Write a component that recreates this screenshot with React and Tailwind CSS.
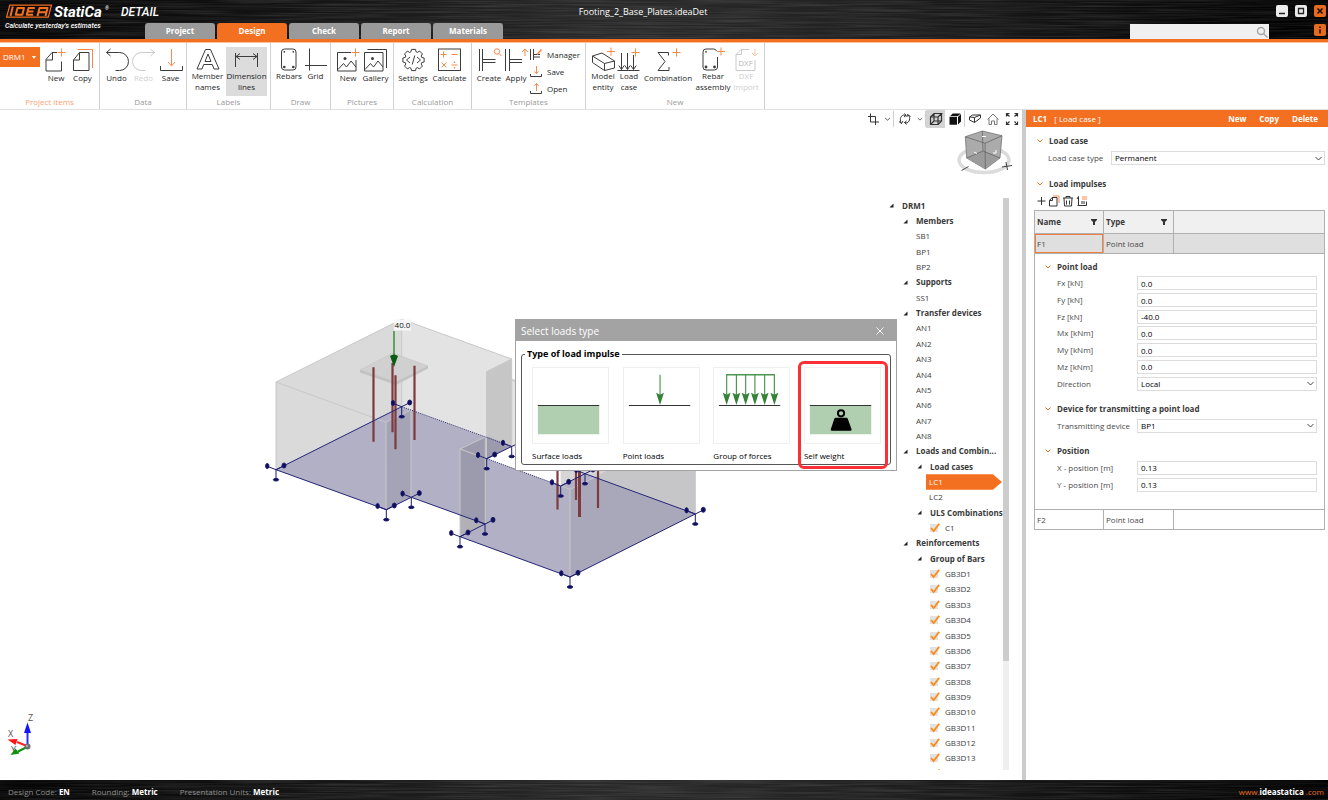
import React from "react";

const INK = "#3d3d3d";
const ORANGE = "#f58a4e";
const FADED = "#c9c9c9";

function BrushedMetal({ id }) {
  return (
    <svg className="pointer-events-none absolute inset-0 h-full w-full" aria-hidden="true">
      <defs>
        <filter id={id} x="0" y="0" width="100%" height="100%">
          <feTurbulence type="fractalNoise" baseFrequency="0.013 0.67" numOctaves="2" seed="4" />
          <feColorMatrix values="0 0 0 0 1  0 0 0 0 1  0 0 0 0 1  1.1 0 0 0 -0.38" />
        </filter>
        <linearGradient id={`${id}-shade`}>
          <stop offset="0" stopColor="#050505" />
          <stop offset="0.25" stopColor="#161616" />
          <stop offset="0.45" stopColor="#292929" />
          <stop offset="0.6" stopColor="#242424" />
          <stop offset="0.85" stopColor="#0e0e0e" />
          <stop offset="1" stopColor="#000000" />
        </linearGradient>
      </defs>
      <rect width="100%" height="100%" fill={`url(#${id}-shade)`} />
      <rect width="100%" height="100%" filter={`url(#${id})`} opacity="0.2" />
    </svg>
  );
}

function Icon({ box, w, h, color = INK, children }) {
  return (
    <svg
      width={w}
      height={h}
      viewBox={box}
      fill="none"
      stroke={color}
      strokeWidth="1"
      className="shrink-0"
      aria-hidden="true"
    >
      {children}
    </svg>
  );
}

function Plus({ x, y }) {
  return <path stroke={ORANGE} d={`M${x - 4} ${y}h8M${x} ${y - 4}v8`} />;
}

const gearPath = (() => {
  const pts = [];
  for (let i = 0; i < 8; i++) {
    const a = (i * Math.PI) / 4;
    [[-0.3, 8.6], [-0.19, 10.8], [0.19, 10.8], [0.3, 8.6]].forEach(([d, r]) => {
      pts.push(`${(414.5 + r * Math.sin(a + d)).toFixed(2)} ${(60 - r * Math.cos(a + d)).toFixed(2)}`);
    });
  }
  return `M${pts.join("L")}Z`;
})();

const icons = {
  newItem: (
    <Icon box="44 47 26 26" w={26} h={26}>
      <path d="M58 52.5h-5l-6 7v11.500h15.500V61.500M53.500 52.500v7.500h-6.500" />
      <Plus x={62.5} y={52.5} />
    </Icon>
  ),
  copy: (
    <Icon box="71 47 24 26" w={24} h={26}>
      <path d="M73.500 60l6-7.500h9.500v18h-15.500zM79.500 52.500v7.500h-6" />
      <path stroke={ORANGE} d="M77.500 49.500h15v18.500" />
    </Icon>
  ),
  undo: (
    <Icon box="104 47 26 26" w={26} h={26}>
      <path d="M106.500 52.500h13a9 9 0 0 1 0 18h-4M110.500 49l-4 3.500 4 3.500" />
    </Icon>
  ),
  redo: (
    <Icon box="131 47 26 26" w={26} h={26} color={FADED}>
      <path d="M154.500 52.500h-13a9 9 0 0 0 0 18h4M150.500 49l4 3.500-4 3.500" />
    </Icon>
  ),
  save: (
    <Icon box="157 47 26 26" w={26} h={26}>
      <path d="M159.500 66v4.500h22V66" />
      <path stroke={ORANGE} d="M170.500 49v16.500M167 62l3.500 4 3.500-4" />
    </Icon>
  ),
  member: (
    <Icon box="195 47 26 24" w={26} h={24}>
      <path d="M205.500 49.500h5l8.500 19.500h-5l-1.700-4.500h-8.600l-1.700 4.500h-5zM208 54l-3 7.500h6z" />
    </Icon>
  ),
  dimension: (
    <Icon box="234 47 26 24" w={26} h={24}>
      <path d="M235.500 53v14M257.500 53v14M236 56.500h21M240 53.500l-4 3 4 3M253 53.500l4 3-4 3" />
    </Icon>
  ),
  rebars: (
    <Icon box="277 47 24 24" w={24} h={24}>
      <rect x="281.500" y="49" width="14.500" height="21" rx="3" />
      <g fill={INK} stroke="none">
        <circle cx="284.300" cy="51.800" r="0.9" />
        <circle cx="293.300" cy="51.800" r="0.9" />
        <circle cx="284.300" cy="67" r="1.300" />
        <circle cx="293.300" cy="67" r="1.300" />
      </g>
    </Icon>
  ),
  grid: (
    <Icon box="303 47 24 24" w={24} h={24}>
      <path d="M308.500 48.500v22M304 65.500h22" />
    </Icon>
  ),
  picture: (
    <Icon box="335 47 26 26" w={26} h={26}>
      <path d="M351 52.500h-13.500v18.500h18.500V60M338 69.500l5.500-6 3 3.500 4.500-6 5 6" />
      <circle cx="345" cy="58.500" r="1.500" fill={INK} stroke="none" />
      <Plus x={355.5} y={52.500} />
    </Icon>
  ),
  gallery: (
    <Icon box="363 47 26 26" w={26} h={26}>
      <path d="M364.500 52.500h18.500v18.500h-18.500zM367.500 49.500h19v18.500M365 69.500l5.500-6 3 3.500 4.500-6 5 6" />
      <circle cx="372.500" cy="58.500" r="1.500" fill={INK} stroke="none" />
    </Icon>
  ),
  settings: (
    <Icon box="401 47 26 26" w={26} h={26}>
      <path strokeLinejoin="round" d={gearPath} />
      <path d="M411 57l-3.500 3 3.500 3M418 57l3.500 3-3.500 3M415.800 55.500l-2.600 9" />
    </Icon>
  ),
  calculate: (
    <Icon box="437 47 25 26" w={25} h={26}>
      <rect x="438.500" y="49" width="22" height="21.500" />
      <path stroke={ORANGE} d="M440.500 54.500h6M443.500 51.500v6M451.500 54.500h6M441.500 62.500l5 5M446.500 62.500l-5 5M451.500 65h6" />
      <path stroke={ORANGE} strokeWidth="1.400" d="M454.500 61.600v1.400M454.500 67v1.400" />
    </Icon>
  ),
  create: (
    <Icon box="476 47 25 26" w={25} h={26}>
      <path d="M478.500 49v22M481.500 49v22M482 59.500h12.500M482 62.500h12.500" />
      <path stroke={ORANGE} d="M498.200 53.700l2.300 2.500" />
      <circle cx="496" cy="51.500" r="2.700" stroke={ORANGE} />
    </Icon>
  ),
  apply: (
    <Icon box="503 47 25 26" w={25} h={26}>
      <path d="M504.500 49v22M508.500 49v22M509 59.500h12M509 62.500h12" />
      <path stroke={ORANGE} d="M524 49.500v6.500M521 52l3-3 3 3" />
    </Icon>
  ),
  manager: (
    <Icon box="530 49 13 13" w={13} h={13}>
      <path d="M530.500 50v11M533.500 50v11M534 55.500h6M534 58h6" />
      <path stroke={ORANGE} strokeWidth="1.600" d="M541.500 50.500l-4.500 5" />
    </Icon>
  ),
  saveSmall: (
    <Icon box="530 65 13 13" w={13} h={13}>
      <path d="M530.500 74v2.500h11V74" />
      <path stroke={ORANGE} d="M536.500 66v7.500M534.500 71.500l2 2.200 2-2.200" />
    </Icon>
  ),
  openSmall: (
    <Icon box="530 82 13 13" w={13} h={13}>
      <path d="M530.500 91v2.500h11V91" />
      <path stroke={ORANGE} d="M536.500 83.500v7.500M534.500 85.700l2-2.200 2 2.200" />
    </Icon>
  ),
  entity: (
    <Icon box="590 47 27 24" w={27} h={24}>
      <path strokeLinejoin="round" d="M592.500 56l9.500-3 12.500 8-10 2.500zM592.500 56v6.500l12 8V63.500M614.500 61v7l-10 2.500" />
      <Plus x={611} y={51.500} />
    </Icon>
  ),
  loadCase: (
    <Icon box="617 47 26 24" w={26} h={24}>
      <path d="M618.500 70.500h22M622.500 53v16.500M628.500 53v16.500M634.500 55v14.500M619.800 65.500l2.700 4 2.700-4M625.800 65.500l2.700 4 2.700-4M631.800 65.500l2.700 4 2.700-4" />
      <Plus x={636.5} y={52.500} />
    </Icon>
  ),
  combination: (
    <Icon box="655 47 26 26" w={26} h={26}>
      <path d="M668.500 55.500v-3h-10.500l7 9-7 9h11v-3.500" />
      <Plus x={676.5} y={52.500} />
    </Icon>
  ),
  rebarNew: (
    <Icon box="700 47 26 24" w={26} h={24}>
      <path d="M717.500 57v10a3 3 0 0 1-3 3h-8.500a3 3 0 0 1-3-3V52a3 3 0 0 1 3-3h7.500" />
      <path d="M713.500 49a3 3 0 0 1 3 2" />
      <g fill={INK} stroke="none">
        <circle cx="706" cy="51.800" r="0.900" />
        <circle cx="706" cy="67" r="1.400" />
        <circle cx="714.500" cy="67" r="1.400" />
      </g>
      <Plus x={721} y={51.500} />
    </Icon>
  ),
  dxf: (
    <Icon box="734 47 25 24" w={25} h={24} color={FADED}>
      <path d="M749 49.500h-8l-5 5v16h19V60M741.500 49.500v5h-5.500" />
      <text x="745.500" y="66" textAnchor="middle" fontSize="8" fill="#b8b8b8" stroke="none">
        DXF
      </text>
      <path stroke="#fbc6a6" d="M755 49v6.500M752 53l3 3 3-3" />
    </Icon>
  ),
};

function Tool({ icon, label, width, active, disabled }) {
  return (
    <button
      type="button"
      disabled={disabled}
      className={`flex h-[49px] flex-col items-center justify-start text-center leading-[11px] ${width} ${
        active ? "bg-[#dcdcdc]" : ""
      } ${disabled ? "text-[#cfcfcf]" : "text-[#1f1f1f]"}`}
    >
      {icons[icon]}
      <span className="-mt-px flex flex-col whitespace-nowrap">
        {label.split("|").map((line) => (
          <span key={line}>{line}</span>
        ))}
      </span>
    </button>
  );
}

function Group({ title, width, pad = "pl-[3px]", titleClass = "text-[#9a9a9a]", children }) {
  return (
    <section
      aria-label={title}
      className={`flex shrink-0 flex-col justify-between border-r border-[#d0d0d0] pb-px pt-1 ${width}`}
    >
      <div className={`flex items-start ${pad}`}>{children}</div>
      <h2 className={`text-center leading-3 ${titleClass}`}>{title}</h2>
    </section>
  );
}

function Header() {
  const tabs = ["Project", "Design", "Check", "Report", "Materials"];
  return (
    <header className="relative h-[43px] shrink-0 border-b border-[#fbc09c] bg-black text-white">
      <BrushedMetal id="metal-top" />
      <div className="relative grid h-full grid-cols-[145px_1fr_198px] border-b-[3px] border-[#f37021]">
        <div className="flex flex-col pl-1">
          <svg viewBox="4 0 160 21" className="h-[21px] w-[160px]" fontFamily="Roboto, 'Liberation Sans', sans-serif" fontStyle="italic">
            <path d="M9.800 5.200h41.700l-3.200 12h-41.700z" fill="none" stroke="#f37021" strokeWidth="1.200" />
            <g fill="none" stroke="#f37021" strokeWidth="2" strokeLinejoin="round">
              <path d="M12.800 6.500l-2.300 9.500M17.500 8h6.500l-1.700 6.800h-6.500zM34.800 8h-6.300l-1.700 6.800h6.300M28 11.400h5.500M37.500 16l2-8h8l-2 8M38.500 12.200h7.500" />
            </g>
            <text x="54" y="17" fontSize="15" fontWeight="700" fill="#fff">
              StatiCa
            </text>
            <text x="105" y="10" fontSize="5" fill="#fff">
              ®
            </text>
            <text x="121" y="15.500" fontSize="12" fontWeight="500" fill="#fff">
              DETAIL
            </text>
          </svg>
          <p className="pl-px pt-px font-[Roboto] text-[7px] font-medium italic leading-[9px]">
            Calculate yesterday's estimates
          </p>
        </div>
        <div className="relative flex min-w-0 items-end">
          <nav className="flex gap-0.5">
            {tabs.map((t) => (
              <a
                key={t}
                href={`#${t.toLowerCase()}`}
                className={`flex h-4 w-[70px] items-center justify-center rounded-t-[3px] font-bold text-white ${
                  t === "Design" ? "bg-[#f37021]" : "bg-[#9a9a9a]"
                }`}
              >
                {t}
              </a>
            ))}
          </nav>
        </div>
        <div className="flex flex-col items-end justify-between pt-[5px]">
          <div className="flex gap-[7px]">
            <button type="button" aria-label="Minimize" className="flex h-3 w-3 items-center justify-center rounded-[2px] bg-[#ececec]">
              <svg width="12" height="12" viewBox="0 0 12 12"><path d="M3 8.500h6" stroke="#222" strokeWidth="1.500" /></svg>
            </button>
            <button type="button" aria-label="Maximize" className="flex h-3 w-3 items-center justify-center rounded-[2px] bg-[#ececec]">
              <svg width="12" height="12" viewBox="0 0 12 12"><path d="M3.500 3.500h5v5h-5z" fill="none" stroke="#222" strokeWidth="1.300" /></svg>
            </button>
            <button type="button" aria-label="Close" className="mr-0.5 flex h-3 w-3 items-center justify-center rounded-[2px] bg-[#e86a1e]">
              <svg width="12" height="12" viewBox="0 0 12 12"><path d="M3.500 3.500l5 5M8.500 3.500l-5 5" stroke="#111" strokeWidth="1.600" /></svg>
            </button>
          </div>
          <div className="flex items-start gap-[45px]">
            <label className="flex h-[15px] w-[139px] items-center bg-[#f0f0f0]">
              <input aria-label="Search" className="min-w-0 flex-1 bg-transparent px-1 text-[#333] outline-none" />
              <svg width="14" height="14" viewBox="0 0 14 14" fill="none" stroke="#a8a8a8" strokeWidth="1.500">
                <circle cx="6" cy="6" r="3.500" />
                <path d="M8.500 8.500l4 4" />
              </svg>
            </label>
            <button type="button" aria-label="Info" className="mr-0.5 flex h-3 w-3 items-center justify-center rounded-[2px] bg-[#e86a1e]">
              <svg width="12" height="12" viewBox="0 0 12 12"><path d="M6 2.500v1.600M6 5.200v4.300" stroke="#111" strokeWidth="1.500" /></svg>
            </button>
          </div>
        </div>
      </div>
      <h1 className="absolute left-0 right-40 top-[5px] pl-[118px] text-center text-[9px] leading-[14px]">
        Footing_2_Base_Plates.ideaDet
      </h1>
    </header>
  );
}

function Ribbon() {
  return (
    <div className="flex h-[67px] shrink-0 border-b border-[#e0e0e0] bg-white">
      <Group title="Project items" width="w-[100px]" pad="pl-0" titleClass="text-[#f9a273]">
        <button type="button" className="mr-[3px] flex h-5 w-10 items-center justify-between bg-[#f37021] pl-[3px] pr-1 text-white">
          DRM1
          <svg width="4" height="3" viewBox="0 0 4 3" fill="#fff"><path d="M0 0h4L2 3z" /></svg>
        </button>
        <Tool icon="newItem" label="New" width="w-[26px]" />
        <Tool icon="copy" label="Copy" width="w-[27px]" />
      </Group>
      <Group title="Data" width="w-[87px]">
        <Tool icon="undo" label="Undo" width="w-[27px]" />
        <Tool icon="redo" label="Redo" width="w-[27px]" disabled />
        <Tool icon="save" label="Save" width="w-[27px]" />
      </Group>
      <Group title="Labels" width="w-[84px]" pad="pl-0.5">
        <Tool icon="member" label="Member|names" width="w-[37px]" />
        <Tool icon="dimension" label="Dimension|lines" width="w-[41px]" active />
      </Group>
      <Group title="Draw" width="w-[60px]">
        <Tool icon="rebars" label="Rebars" width="w-[30px]" />
        <Tool icon="grid" label="Grid" width="w-[23px]" />
      </Group>
      <Group title="Pictures" width="w-[63px]">
        <Tool icon="picture" label="New" width="w-[28px]" />
        <Tool icon="gallery" label="Gallery" width="w-[27px]" />
      </Group>
      <Group title="Calculation" width="w-[78px]" pad="pl-px">
        <Tool icon="settings" label="Settings" width="w-[36px]" />
        <Tool icon="calculate" label="Calculate" width="w-[37px]" />
      </Group>
      <Group title="Templates" width="w-[114px]">
        <Tool icon="create" label="Create" width="w-[28px]" />
        <Tool icon="apply" label="Apply" width="w-[26px]" />
        <div className="flex flex-col gap-1 pl-px pt-px">
          {[["manager", "Manager"], ["saveSmall", "Save"], ["openSmall", "Open"]].map(([k, t]) => (
            <button key={k} type="button" className="flex items-center gap-1 text-[#1f1f1f]">
              {icons[k]}
              {t}
            </button>
          ))}
        </div>
      </Group>
      <Group title="New" width="w-[179px]" pad="pl-1">
        <Tool icon="entity" label="Model|entity" width="w-[26px]" />
        <Tool icon="loadCase" label="Load|case" width="w-[26px]" />
        <Tool icon="combination" label="Combination" width="w-[52px]" />
        <Tool icon="rebarNew" label="Rebar|assembly" width="w-[38px]" />
        <Tool icon="dxf" label="DXF|Import" width="w-[28px]" disabled />
      </Group>
    </div>
  );
}

const supports = [
  [276, 469.7], [386.3, 509.7], [411.3, 497.3], [401.7, 406.7], [511.7, 446.5], [486.7, 458.7],
  [485, 524], [460, 536.7], [570, 577], [695.3, 514], [560.7, 486], [585, 473.7],
];

function Model() {
  return (
    <svg
      role="img"
      aria-label="Footing model"
      viewBox="260 310 460 290"
      className="absolute left-[260px] top-[200px] h-[290px] w-[460px]"
    >
      <path fill="#dadada" d="M276 382L401.700 319.300V410L276 469.700z" />
      <path fill="#e3e3e3" d="M401.700 319.300L511.700 359V446.500L585 473.700 695.300 514V427L486.500 371.500 486.700 458.700 401.700 420z" />
      <path fill="#d6d6d6" d="M560 430H695.300V514L585 473.700 560.700 486z" />
      <path fill="#c6c6c6" d="M486.300 371.700L511.700 359V446.500L486.700 458.700z" />
      <path fill="#d4d4d4" d="M386 422.300L411 410V497.300L386.300 509.700zM460 449L485.300 437V524L460 536.700z" />
      <path
        fill="#b1b0c4"
        d="M276 469.700L401.700 406.700 511.700 446.500 486.700 458.700 560.700 486 585 473.700 695.300 514 570 577 460 536.700 485 524 411.300 497.300 386.300 509.700z"
      />
      <path fill="#8f8ea0" fillOpacity="0.35" d="M386 422.300L411 410V497.300L386.300 509.700z" />
      <path fill="#7c7b8c" fillOpacity="0.400" d="M460 449L485.300 437V524L460 536.700z" />
      <path fill="#7c7b8c" fillOpacity="0.400" d="M486.700 436L511.700 446.500 486.700 458.700z" />
      <path fill="#8f8e98" fillOpacity="0.220" d="M570 489.300L695.300 427V514L570 577z" />
      <g fill="none" stroke="#c8c8c8" strokeWidth="1">
        <path d="M276 469.700V382L401.700 319.300 511.700 359 486.500 371.700 520 383M276 382L386 422.300 411 410M401.700 319.300V406.700M511.700 359V446.500M486.500 371.700V458" />
        <path d="M386 422.300V509.700M411 410V497.300M411 410L485.300 437 460 449 570 489.300 605.700 472M460 449V536.700M485.300 437V524M570 489.300V577M695.300 465V514" />
      </g>
      <path d="M360 370L393 353 428 366 396 382z" fill="#d0d0d0" stroke="#c4c4c4" strokeWidth="0.600" />
      <path d="M360 370v2.500L396 385l32-16.500V366L396 382z" fill="#c2c2c2" />
      <g stroke="#7d3a3f" strokeWidth="2.200">
        <path d="M373.500 367.300V441.700M395.500 375.300V449.300M414.500 365.700V440M392.500 363V432.300" />
        <path d="M557.500 465V509.500M576 465V500M598 465V508" />
        <path strokeWidth="3" d="M579.500 465V517" />
      </g>
      <g fill="none" stroke="#24247a" strokeWidth="1">
        <path d="M401.700 406.700L276 469.700 386.300 509.700 411.300 497.300 485 524 460 536.700 570 577 695.300 514 585 473.700 560.700 486M511.700 446.500L486.700 458.700" />
        <path strokeDasharray="1 1.200" d="M401.700 406.700L511.700 446.500M486.700 458.700L560.700 486" />
      </g>
      {supports.map(([x, y]) => (
        <g key={`${x}-${y}`} stroke="#1d1d6e" strokeWidth="1">
          <path fill="none" d={`M${x - 9} ${y - 3.5}L${x} ${y}L${x + 8} ${y - 4}M${x} ${y}v10`} />
          <ellipse cx={x - 8.7} cy={y - 3.7} rx="1.700" ry="2.600" fill="#0d0d5c" />
          <ellipse cx={x + 8} cy={y - 4.2} rx="2" ry="2.500" fill="#0d0d5c" />
          <ellipse cx={x} cy={y + 10} rx="2.700" ry="1.300" fill="#0d0d5c" />
        </g>
      ))}
      <path d="M394 331V356" stroke="#1c8a1c" strokeWidth="1.300" />
      <path d="M390 356q4-3 8 0l-4 11z" fill="#0b5c14" />
      <path d="M394 319.500h17v11h-17z" fill="#f6f6f6" />
      <text x="402.500" y="328" textAnchor="middle" fontSize="8" fill="#111">
        40.0
      </text>
    </svg>
  );
}

function Triad() {
  return (
    <svg viewBox="4 712 34 48" className="absolute bottom-5 left-1 h-12 w-[34px]" fontSize="9" role="img" aria-label="Axes">
      <path d="M27.500 746V730" stroke="#2a2aff" strokeWidth="2" />
      <path d="M24 733l3.500-10.500 3.500 10.500z" fill="#1414ff" />
      <path d="M27 746l-10-4" stroke="#f22" strokeWidth="2" />
      <path d="M7.500 739.500l10-0.500-2 6z" fill="#ff1414" />
      <path d="M27 747l-9 4.500" stroke="#0a940a" strokeWidth="2" />
      <path d="M10.500 755l5-6.500 4 5z" fill="#0a940a" />
      <circle cx="27.500" cy="746.500" r="3" fill="#6e6e6e" />
      <circle cx="27" cy="746" r="1.200" fill="#a5a5a5" />
      <g fill="#555" fontFamily="'Open Sans', sans-serif">
        <text x="28" y="721">Z</text>
        <text x="8" y="737">X</text>
        <text x="11" y="753">Y</text>
      </g>
    </svg>
  );
}

function ViewButton({ label, width, active, children }) {
  return (
    <button type="button" aria-label={label} className={`flex h-[18px] items-center justify-center ${width} ${active ? "bg-[#d4d4d4]" : ""}`}>
      <svg width="14" height="14" viewBox="0 0 14 14" fill="none" stroke="#333" strokeWidth="1">
        {children}
      </svg>
    </button>
  );
}

function ViewToolbar() {
  const sep = <span className="h-4 w-px bg-[#cfcfcf]" />;
  const chevron = <path d="M4 5.800L7 8.500l3-2.700" />;
  return (
    <div className="flex items-center justify-end pr-px">
      <ViewButton label="Clip" width="w-[18px]"><path d="M4.500 1.500v8.500h8.500M2 4.500h7.500V13" /></ViewButton>
      <ViewButton label="Clip options" width="w-[11px]">{chevron}</ViewButton>
      {sep}
      <ViewButton label="Rotate" width="w-[21px]">
        <path d="M3.500 11.500C1.500 8.500 2 4 5.500 3L8 3.500M6.500 1.500L8 3.500 6 5M1 9.500l2.500 2L5 9M9.500 2.500c3 2 3 6.500-0.500 8.500l-2.500-0.500M8.500 12.500l-2-2 2-1.500M12.500 4.500l-3-2L8.800 5" />
      </ViewButton>
      <ViewButton label="Rotate options" width="w-[10px]">{chevron}</ViewButton>
      {sep}
      <ViewButton label="Wireframe" width="w-[19px]" active>
        <path strokeWidth="1.200" d="M1.500 5h7.500v7.500h-7.500zM1.500 5l3.500-3.500h7.500L9 5M12.500 1.500V9L9 12.500M5 1.500V9h7.500M5 9l-3.500 3.500" />
      </ViewButton>
      <ViewButton label="Solid" width="w-[19px]">
        <path fill="#111" stroke="none" d="M1.500 4.800h7.500v8h-7.500zM2.200 4l2.500-2.500h8L10 4zM10 5l3-3v7.500l-3 3z" />
      </ViewButton>
      {sep}
      <ViewButton label="Section" width="w-[19px]">
        <path d="M1.500 5l3-2h8L6.500 5.500zM1.500 5v3l5 2.500v-5M6.500 10.500l6-4.500V3" />
      </ViewButton>
      <ViewButton label="Home" width="w-[18px]">
        <path stroke="#777" d="M1.500 7.500L7 2l5.500 5.500M3 6.500v6h2.500V9h3v3.500H11v-6" />
      </ViewButton>
      <ViewButton label="Fit" width="w-[19px]">
        <path strokeWidth="1.200" d="M1.500 4.500v-3h3M1.500 1.500l3 3M9.500 1.500h3v3M12.500 1.500l-3 3M1.500 9.500v3h3M1.500 12.500l3-3M9.500 12.500h3v-3M12.500 12.500l-3-3" />
      </ViewButton>
    </div>
  );
}

function NavCube() {
  return (
    <svg viewBox="955 128 60 50" className="mr-[7px] h-[50px] w-[60px] self-end" role="img" aria-label="View cube">
      <ellipse cx="984" cy="160" rx="25" ry="12.500" fill="none" stroke="#dcdcdc" strokeWidth="3.500" />
      <path d="M965.300 136.700L982.300 131 1002 135.700 1000 158 985.300 169 966.700 158z" fill="#ababab" stroke="#666" strokeWidth="0.700" />
      <path d="M966.700 158L983 151 1000 158 985.300 169z" fill="#9b9b9b" />
      <path d="M965.300 136.700L985 143.300 1002 135.700M985 143.300L985.300 169M982.300 131L983 151 966.700 158M983 151L1000 158" fill="none" stroke="#5d5d5d" strokeWidth="0.700" />
      <path d="M982 136.500h4M974 152l3 1.500M993 153h3v-3" stroke="#fff" strokeWidth="1" fill="none" />
      <path d="M961.500 170.500l7-4M1002 167l10-1.500M1006 162l1.500 8" stroke="#444" strokeWidth="1" />
    </svg>
  );
}

const tree = [
  [0, "DRM1"], [1, "Members"], [2, "SB1", "leaf"], [2, "BP1", "leaf"], [2, "BP2", "leaf"],
  [1, "Supports"], [2, "SS1", "leaf"], [1, "Transfer devices"],
  ...[1, 2, 3, 4, 5, 6, 7, 8].map((n) => [2, `AN${n}`, "leaf"]),
  [1, "Loads and Combin..."], [2, "Load cases"], [3, "LC1", "selected"], [3, "LC2", "leaf"],
  [2, "ULS Combinations"], [3, "C1", "check"], [1, "Reinforcements"], [2, "Group of Bars"],
  ...[1, 2, 3, 4, 5, 6, 7, 8, 9, 10, 11, 12, 13].map((n) => [3, `GB3D${n}`, "check"]),
];

const indents = ["pl-1", "pl-[18px]", "pl-8", "pl-[46px]"];
const leafIndents = ["", "", "pl-[31px]", "pl-11"];

function Check({ name }) {
  return (
    <span className="grid h-3 w-3 shrink-0">
      <input
        id={name}
        type="checkbox"
        defaultChecked
        className="peer col-start-1 row-start-1 h-2 w-2 appearance-none self-center bg-[#e2e2e2]"
      />
      <svg viewBox="0 0 12 12" className="pointer-events-none invisible col-start-1 row-start-1 peer-checked:visible" fill="none" stroke="#ff8a14" strokeWidth="1.800">
        <path d="M1 6l2.700 3L9.200 1.800" />
      </svg>
    </span>
  );
}

function TreeRow({ depth, label, kind }) {
  if (kind === "selected")
    return (
      <li className="flex min-h-0 items-center pl-[41px]">
        <button
          type="button"
          className="flex h-full w-[76px] items-center bg-[#f37021] pl-[3px] text-white [clip-path:polygon(0_0,88%_0,100%_50%,88%_100%,0_100%)]"
        >
          {label}
        </button>
      </li>
    );
  if (kind === "leaf") return <li className={`flex min-h-0 items-center text-[#404040] ${leafIndents[depth]}`}>{label}</li>;
  if (kind === "check")
    return (
      <li className="flex min-h-0 items-center gap-[2px] pl-[45px] text-[#404040]">
        <Check name={label} />
        <label htmlFor={label} className="pl-px">{label}</label>
      </li>
    );
  return (
    <li className={`flex min-h-0 items-center gap-[8px] whitespace-nowrap font-bold text-[#3a3a3a] ${indents[depth]}`}>
      <svg width="5" height="5" viewBox="0 0 5 5" className="shrink-0" fill="#222">
        <path d="M4.500 0.500v4h-4z" />
      </svg>
      {label}
    </li>
  );
}

function Tree() {
  return (
    <div className="mb-[10px] mr-[13px] mt-5 flex min-h-0 w-[124px] flex-1 self-end">
      <div className="flex min-w-0 flex-1 flex-col overflow-hidden">
        <ul className="grid min-h-0 flex-1 auto-rows-fr">
          {tree.map(([depth, label, kind]) => (
            <TreeRow key={label} depth={depth} label={label} kind={kind} />
          ))}
        </ul>
        <div className="h-1 shrink-0 overflow-hidden pl-[53px] pt-[3px]">
          <div className="h-px w-0.5 bg-[#ffb066]" />
        </div>
      </div>
      <div className="-ml-1.5 w-1.5 bg-[#efefef]">
        <div className="h-[81%] bg-[#cdcdcd]" />
      </div>
    </div>
  );
}

function LoadCard({ label, highlighted, children }) {
  return (
    <button type="button" className="relative flex w-[77px] flex-col gap-1.5 text-left text-black">
      <svg viewBox="0 0 77 77" className="h-[77px] w-[77px] border border-[#efefef] bg-white" fill="none">
        {children}
        <path d="M5 38.500h63" stroke="#333" strokeWidth="1.200" />
      </svg>
      <span className="whitespace-nowrap leading-3">{label}</span>
      {highlighted && <span className="absolute -bottom-[7px] -left-[6px] -right-[7px] -top-[6px] rounded-md border-[3px] border-[#fb2f36]" />}
    </button>
  );
}

function Arrow({ x }) {
  return (
    <g>
      <path d={`M${x} 7V33`} stroke="#4d964f" strokeWidth="1.200" />
      <path d={`M${x - 4} 25.500l4 2 4-2-4 12.500z`} fill="#348238" />
    </g>
  );
}

function LoadDialog() {
  return (
    <div role="dialog" aria-label="Select loads type" className="absolute left-[515px] top-[209px] w-[382px] border border-[#a3a3a3] bg-white">
      <div className="flex h-[21px] items-center justify-between bg-[#a3a3a3] pl-[5px] pr-3 text-[10px] text-white">
        Select loads type
        <button type="button" aria-label="Close dialog">
          <svg width="8" height="8" viewBox="0 0 8 8" stroke="#fff" strokeWidth="0.900"><path d="M0.500 0.500l7 7M7.500 0.500l-7 7" /></svg>
        </button>
      </div>
      <fieldset className="mx-[5px] mb-[5px] mt-[7px] rounded-[3px] border border-[#555] pb-[2px] pl-[10px] pr-[9px]">
        <legend className="-ml-[7px] px-0.5 text-[9px] font-bold leading-3 text-black">Type of load impulse</legend>
        <div className="flex justify-between pt-[7px]">
          <LoadCard label="Surface loads">
            <path d="M5 38h63v30H5z" fill="#b0cfb0" />
          </LoadCard>
          <LoadCard label="Point loads">
            <Arrow x={37} />
          </LoadCard>
          <LoadCard label="Group of forces">
            <path d="M12.500 7h50" stroke="#4d964f" strokeWidth="1.500" />
            {[13, 23, 32.500, 42, 52, 62].map((x) => <Arrow key={x} x={x} />)}
          </LoadCard>
          <LoadCard label="Self weight" highlighted>
            <path d="M5 38h63v30H5z" fill="#b0cfb0" />
            <circle cx="37" cy="46.500" r="3.200" stroke="#000" strokeWidth="2" />
            <path d="M31.500 51h11q1 0 1.400 1l3.900 11q0.500 1.500-1 1.500H27.500q-1.500 0-1-1.500l3.600-11q0.400-1 1.400-1z" fill="#000" />
          </LoadCard>
        </div>
      </fieldset>
    </div>
  );
}

function Chevron() {
  return (
    <svg width="6" height="4" viewBox="0 0 6 4" fill="none" stroke="#f37021" strokeWidth="1" className="shrink-0">
      <path d="M0.500 0.500L3 3l2.500-2.500" />
    </svg>
  );
}

function Heading({ children }) {
  return (
    <h3 className="flex h-[17px] items-center gap-[6px] font-bold text-[#3a3a3a]">
      <Chevron />
      {children}
    </h3>
  );
}

function Field({ label, value, select, wide }) {
  const id = label.replace(/\W+/g, "-").toLowerCase();
  const box = "h-[14px] w-full border border-[#dcdcdc] bg-white pl-[3px] text-black outline-none";
  return (
    <div className={`grid items-center ${wide ? "grid-cols-[63px_1fr]" : "grid-cols-[80px_1fr]"}`}>
      <label htmlFor={id} className="whitespace-nowrap text-[#4a4a4a]">{label}</label>
      {select ? (
        <div className="grid items-center">
          <select id={id} className={`${box} col-start-1 row-start-1 appearance-none leading-3`}>
            <option>{value}</option>
          </select>
          <svg width="7" height="5" viewBox="0 0 7 5" fill="none" stroke="#444" className="pointer-events-none col-start-1 row-start-1 mr-[3px] justify-self-end">
            <path d="M0.500 1l3 3 3-3" />
          </svg>
        </div>
      ) : (
        <input id={id} defaultValue={value} className={box} />
      )}
    </div>
  );
}

function Filter() {
  return (
    <svg width="6" height="6" viewBox="0 0 6 6" fill="#333"><path d="M0 0h6v1L4 3v3H2V3L0 1z" /></svg>
  );
}

function PropertiesPanel() {
  const cell = "border border-[#b0b0b0] px-0.5 text-left font-normal";
  return (
    <aside className="w-[306px] shrink-0 border-l-4 border-[#cbcbcb] bg-white">
      <div className="flex h-[17px] items-center bg-[#f37021] pl-[7px] pr-[10px] text-white">
        <span className="font-bold">LC1</span>
        <span className="flex-1 pl-[7px]">[ Load case ]</span>
        <div className="flex gap-[13px]">
          <button type="button" className="font-bold">New</button>
          <button type="button" className="font-bold">Copy</button>
          <button type="button" className="font-bold">Delete</button>
        </div>
      </div>
      <div className="pl-[8px] pr-[3px] pt-[5px]">
        <div className="pl-[3px]">
          <Heading>Load case</Heading>
          <div className="pl-[11px] pt-0.5"><Field label="Load case type" value="Permanent" select wide /></div>
          <div className="pt-[10px]"><Heading>Load impulses</Heading></div>
        </div>
        <div className="flex h-[18px] items-center gap-0.5 pl-[2px]">
          {[
            ["Add", <path key="a" d="M5.500 2v8M1.500 6h8" />],
            ["Duplicate", <g key="d"><path d="M1.500 5.500l2.500-3h5v8.500H1.500zM4.500 2.500v3h-3" /><path stroke={ORANGE} d="M5 1h6v7" /></g>],
            ["Remove", <path key="r" d="M1 3h10M4 3V1.500h4V3M2 3l0.500 8h7l0.500-8M4.500 5.500v4M7.500 5.500v4" />],
            ["Renumber", <g key="n"><path d="M1 4l1.500-2.500v9M1.500 10.500h9v-4M6 6v3M8 6v3" /><path stroke={ORANGE} d="M6 2h5M6 4h5" /></g>],
          ].map(([label, drawing], i) => (
            <button key={label} type="button" aria-label={label}>
              <svg width={i ? 12 : 10} height="12" viewBox={i ? "0 0 12 12" : "0 0 10 12"} fill="none" stroke="#333">{drawing}</svg>
            </button>
          ))}
        </div>
        <table className="w-full table-fixed border-collapse text-[#4a4a4a]">
          <colgroup>
            <col className="w-[69px]" />
            <col className="w-[70px]" />
            <col />
          </colgroup>
          <thead className="bg-[#f0f0f0]">
            <tr className="h-[23px]">
              {["Name", "Type"].map((t) => (
                <th key={t} scope="col" className={cell}>
                  <div className="flex items-center justify-between pr-1 font-bold text-[#3a3a3a]">{t}<Filter /></div>
                </th>
              ))}
              <th scope="col" className={cell} aria-label="Notes" />
            </tr>
          </thead>
          <tbody>
            <tr className="h-5 bg-[#dfdfdf]">
              <td className="border border-[#b0b0b0] p-0">
                <div className="flex h-[19px] items-center border border-[#f08040] px-px">F1</div>
              </td>
              <td className={cell}>Point load</td>
              <td className={cell} />
            </tr>
            <tr>
              <td colSpan="3" className="border border-[#b0b0b0] pb-4 pl-[10px] pr-[7px] pt-1">
                <Heading>Point load</Heading>
                <div className="grid h-[117px] auto-rows-fr pl-3">
                  <Field label="Fx [kN]" value="0.0" />
                  <Field label="Fy [kN]" value="0.0" />
                  <Field label="Fz [kN]" value="-40.0" />
                  <Field label="Mx [kNm]" value="0.0" />
                  <Field label="My [kNm]" value="0.0" />
                  <Field label="Mz [kNm]" value="0.0" />
                  <Field label="Direction" value="Local" select />
                </div>
                <div className="pt-2"><Heading>Device for transmitting a point load</Heading></div>
                <div className="grid h-[17px] pl-3"><Field label="Transmitting device" value="BP1" select /></div>
                <div className="pt-2"><Heading>Position</Heading></div>
                <div className="grid h-[34px] auto-rows-fr pl-3">
                  <Field label="X - position [m]" value="0.13" />
                  <Field label="Y - position [m]" value="0.13" />
                </div>
              </td>
            </tr>
            <tr className="h-5">
              <td className={cell}>F2</td>
              <td className={cell}>Point load</td>
              <td className={cell} />
            </tr>
          </tbody>
        </table>
      </div>
    </aside>
  );
}

function Footer() {
  const items = [["Design Code:", "EN"], ["Rounding:", "Metric"], ["Presentation Units:", "Metric"]];
  return (
    <footer className="relative h-5 shrink-0 bg-black">
      <BrushedMetal id="metal-bottom" />
      <div className="relative flex h-full items-center justify-between pl-2 pr-1 pt-1 text-[#8c8c8c]">
        <div className="flex gap-[22px]">
          {items.map(([k, v]) => (
            <span key={k}>{k} <b className="text-white">{v}</b></span>
          ))}
        </div>
        <a href="#home" className="text-[#e86a1e]">www.<b className="text-white">ideastatica</b> .com</a>
      </div>
    </footer>
  );
}

export default function App() {
  return (
    <div className="flex h-screen flex-col overflow-hidden bg-white font-['Open_Sans','Noto_Sans',sans-serif] text-[8px] leading-3">
      <Header />
      <Ribbon />
      <div className="flex min-h-0 flex-1">
        <main className="relative flex min-w-0 flex-1 flex-col">
          <Model />
          <Triad />
          <ViewToolbar />
          <NavCube />
          <Tree />
          <LoadDialog />
        </main>
        <PropertiesPanel />
      </div>
      <Footer />
    </div>
  );
}
